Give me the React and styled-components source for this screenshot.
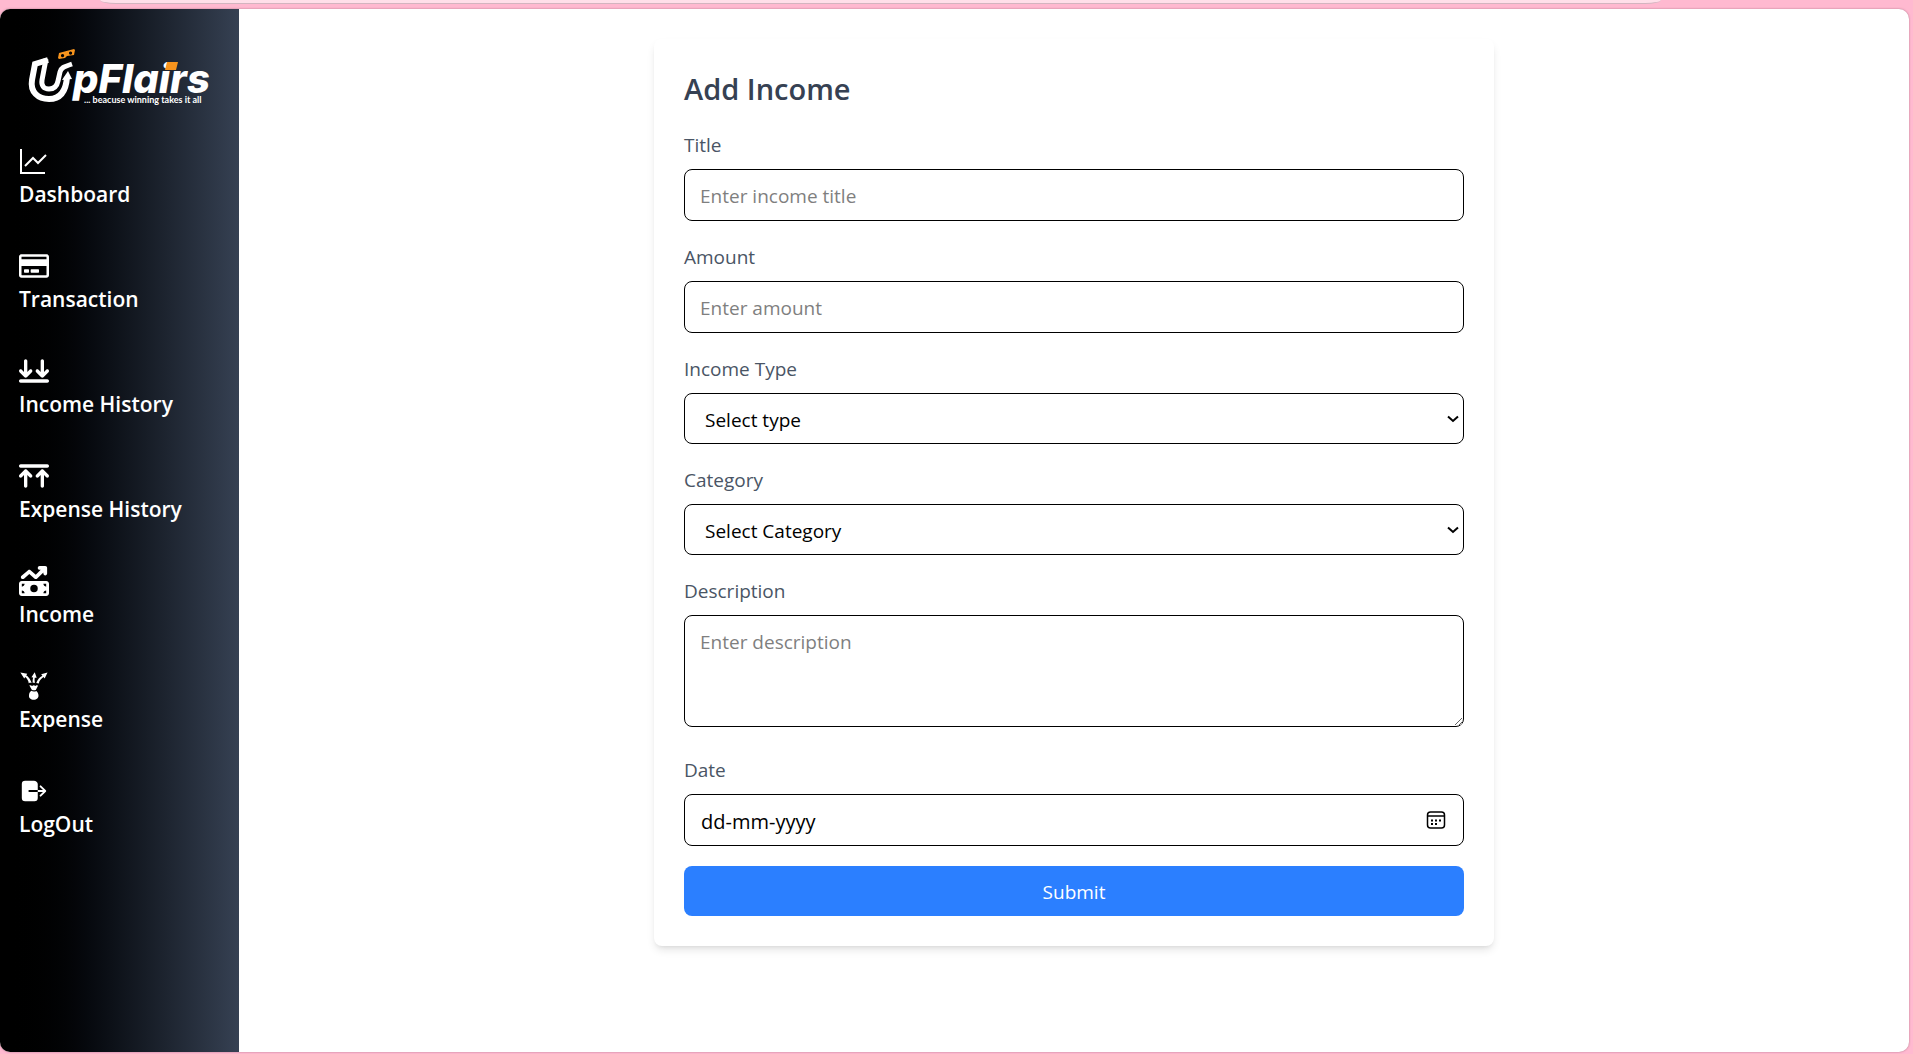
import React from "react";
import styled, { createGlobalStyle } from "styled-components";
import { FaRegCreditCard } from "react-icons/fa";
import { FaArrowsDownToLine, FaArrowsUpToLine, FaMoneyBillTrendUp } from "react-icons/fa6";
import { GiExpense } from "react-icons/gi";
import { IoLogOut } from "react-icons/io5";

const GlobalStyle = createGlobalStyle`
  *, *::before, *::after { box-sizing: border-box; }
  body {
    margin: 0;
    background: #ffb9d0;
    font-family: "Open Sans", "Noto Sans", sans-serif;
    color: #000;
  }
`;

const Frame = styled.div`
  min-height: 100vh;
  display: flex;
  flex-direction: column;
  padding: 0 4px 2px 0;
`;

const AddressBar = styled.div`
  height: 4px;
  margin: 0 248px 5px 100px;
  background: #ffdfe9;
  border-bottom: 1px solid #d3b4bf;
  border-radius: 0 0 16px 16px / 0 0 4px 4px;
`;

const Page = styled.div`
  flex: 1;
  display: flex;
  background: #fff;
  border-radius: 10px;
  overflow: hidden;
  box-shadow: 0 0 2px rgba(90, 40, 60, 0.5);
`;

const Sidebar = styled.aside`
  flex: 0 0 239px;
  padding: 32px 19px;
  color: #fff;
  background: linear-gradient(to right in oklab, #000, #364153);
`;

const LogoLink = styled.a`
  display: block;
  height: 66px;
  margin-bottom: 39px;
`;

const Nav = styled.nav`
  display: flex;
  flex-direction: column;
  gap: 41px;
`;

const NavLink = styled.a`
  display: flex;
  flex-direction: column;
  gap: 2px;
  color: #fff;
  font-size: 21px;
  font-weight: 600;
  line-height: 32px;
  text-decoration: none;
  white-space: nowrap;

  svg {
    display: block;
    width: 30px;
    height: 30px;
  }
`;

const Main = styled.main`
  flex: 1;
  padding: 30px;
`;

const Card = styled.form`
  max-width: 840px;
  margin: 0 auto;
  padding: 30px;
  background: #fff;
  border-radius: 8px;
  box-shadow: 0 5px 8px -1px rgba(0, 0, 0, 0.1), 0 3px 5px -3px rgba(0, 0, 0, 0.1);
`;

const Heading = styled.h2`
  margin: 0 0 20px;
  color: #364153;
  font-size: 29px;
  font-weight: 600;
  line-height: 40px;
`;

const Field = styled.div`
  display: flex;
  flex-direction: column;
  gap: 9px;
  margin-bottom: ${(p) => (p.$roomy ? "27px" : "20px")};
`;

const Label = styled.label`
  padding-top: 1px;
  color: #4a5565;
  font-size: 19px;
  line-height: 30px;
`;

const control = `
  display: block;
  width: 100%;
  margin: 0;
  border: 1px solid #000;
  border-radius: 8px;
  background: #fff;
  color: #000;
  font-family: inherit;
  font-size: 19px;
  line-height: 30px;
`;

const Input = styled.input`
  ${control}
  height: 52px;
  padding: 11px 15px 9px;
  &::placeholder { color: #7f7f7f; opacity: 1; }
`;

const DateInput = styled(Input)`
  padding-left: 16px;
  font-size: 20px;
  &::placeholder { color: #000; }
`;

const TextArea = styled.textarea`
  ${control}
  height: 112px;
  padding: 11px 15px 9px;
  resize: vertical;
  &::placeholder { color: #7f7f7f; opacity: 1; }
`;

const ControlBox = styled.div`
  position: relative;
`;

const Select = styled.select`
  ${control}
  height: 51px;
  padding: 10px 20px 8px;
  appearance: none;
`;

const Chevron = styled.svg`
  position: absolute;
  right: 5px;
  top: 22px;
  width: 12px;
  height: 8px;
  pointer-events: none;
`;

const CalendarButton = styled.button`
  position: absolute;
  right: 18px;
  top: 16px;
  width: 20px;
  height: 20px;
  padding: 0;
  border: 0;
  background: none;
  svg { display: block; }
`;

const Submit = styled.button`
  display: block;
  width: 100%;
  height: 50px;
  padding: 2px 0 0;
  border: 0;
  border-radius: 8px;
  background: #2b7fff;
  color: #fff;
  font-family: inherit;
  font-size: 19px;
  line-height: 30px;
`;

function Logo() {
  return (
    <svg width="200" height="66" viewBox="19 41 200 66" role="img" aria-label="Upflairs">
      <g fill="none" stroke="#fff" strokeWidth="5">
        <path d="M48 60 L35 64 L32 80 C30 92 38 99 49 99 C60 99 66 92 67 77" strokeWidth="6" />
        <path d="M46 59 L42 80 C41 86 44 89 49 89 C54 89 57 86 58 81 L60 72 C61 68 63 67 72 64" />
      </g>
      <path d="M62 80 L68 71 L72 79 Z" fill="#fff" />
      <path
        fillRule="evenodd"
        d="M59 53 L74 49 L75 50 L74 55 L67 56 L65 58 L59 59 L58 58 Z M62.5 54 a1.6 1.6 0 1 0 0.1 0 Z M70.5 51.5 a1.6 1.6 0 1 0 0.1 0 Z"
        fill="#f7941d"
      />
      <text x="73" y="93" fill="#fff" fontFamily="Inter, sans-serif" fontSize="40" fontWeight="800" fontStyle="italic">pFlairs</text>
      <path d="M167 62 L178 62 L176 70 L165 70 Z" fill="#f7941d" />
      <text x="84" y="103" fill="#fff" fontFamily="Lato, sans-serif" fontSize="9" fontWeight="700">... beacuse winning takes it all</text>
    </svg>
  );
}

function LineChartIcon() {
  return (
    <svg viewBox="0 0 30 30" fill="none" stroke="#fff" strokeWidth="2">
      <path d="M2 3 V27 H26" />
      <path d="M6 20 L14 12 L19 17 L27 9" />
    </svg>
  );
}

const links = [
  ["Dashboard", LineChartIcon],
  ["Transaction", FaRegCreditCard],
  ["Income History", FaArrowsDownToLine],
  ["Expense History", FaArrowsUpToLine],
  ["Income", FaMoneyBillTrendUp],
  ["Expense", GiExpense],
  ["LogOut", IoLogOut],
];

function SelectBox({ id, text }) {
  return (
    <ControlBox>
      <Select id={id} defaultValue="">
        <option value="">{text}</option>
      </Select>
      <Chevron viewBox="0 0 12 8" fill="none" stroke="#000" strokeWidth="2">
        <path d="M1 1.5 L6 6 L11 1.5" />
      </Chevron>
    </ControlBox>
  );
}

export default function App() {
  return (
    <>
      <GlobalStyle />
      <Frame>
        <AddressBar />
        <Page>
          <Sidebar>
            <LogoLink href="#home"><Logo /></LogoLink>
            <Nav>
              {links.map(([name, Icon]) => (
                <NavLink key={name} href="#">
                  <Icon />
                  {name}
                </NavLink>
              ))}
            </Nav>
          </Sidebar>
          <Main>
            <Card onSubmit={(e) => e.preventDefault()}>
              <Heading>Add Income</Heading>
              <Field>
                <Label htmlFor="title">Title</Label>
                <Input id="title" placeholder="Enter income title" />
              </Field>
              <Field>
                <Label htmlFor="amount">Amount</Label>
                <Input id="amount" inputMode="decimal" placeholder="Enter amount" />
              </Field>
              <Field>
                <Label htmlFor="type">Income Type</Label>
                <SelectBox id="type" text="Select type" />
              </Field>
              <Field>
                <Label htmlFor="category">Category</Label>
                <SelectBox id="category" text="Select Category" />
              </Field>
              <Field $roomy>
                <Label htmlFor="description">Description</Label>
                <TextArea id="description" placeholder="Enter description" />
              </Field>
              <Field>
                <Label htmlFor="date">Date</Label>
                <ControlBox>
                  <DateInput id="date" placeholder="dd-mm-yyyy" />
                  <CalendarButton type="button" aria-label="Open calendar">
                    <svg width="20" height="20" viewBox="0 0 20 20" fill="none" stroke="#000" strokeWidth="1.5">
                      <rect x="1.5" y="2" width="17" height="16" rx="3" />
                      <path d="M1.5 6 H18.5" />
                      <path d="M5 10.5 h2 M9 10.5 h2 M13 10.5 h2 M5 14 h2 M9 14 h2" strokeWidth="2" />
                    </svg>
                  </CalendarButton>
                </ControlBox>
              </Field>
              <Submit type="submit">Submit</Submit>
            </Card>
          </Main>
        </Page>
      </Frame>
    </>
  );
}
